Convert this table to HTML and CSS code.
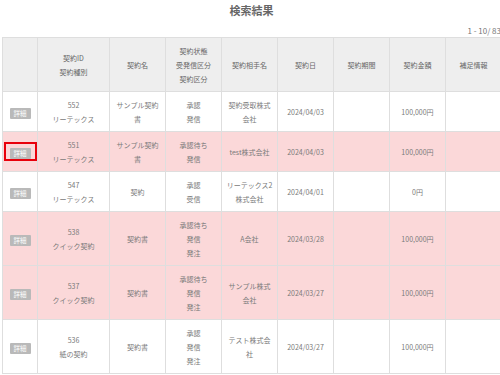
FILE: index.html
```html
<!DOCTYPE html>
<html lang="ja">
<head>
<meta charset="utf-8">
<title>検索結果</title>
<link rel="stylesheet" href="styles.css">
</head>
<body>
<div class="page">
  <h1 class="title">検索結果</h1>
  <div class="count">1 - 10/ 83</div>
  <table class="results">
    <colgroup>
      <col class="c-btn"><col class="c-id"><col class="c"><col class="c"><col class="c"><col class="c"><col class="c"><col class="c"><col class="c">
    </colgroup>
    <thead>
      <tr>
        <th></th>
        <th>契約ID<br>契約種別</th>
        <th>契約名</th>
        <th>契約状態<br>受発信区分<br>契約区分</th>
        <th>契約相手名</th>
        <th>契約日</th>
        <th>契約期間</th>
        <th>契約金額</th>
        <th>補足情報</th>
      </tr>
    </thead>
    <tbody>
      <tr>
        <td><span class="btn">詳細</span></td>
        <td>552<br>リーテックス</td>
        <td>サンプル契約書</td>
        <td>承認<br>発信</td>
        <td>契約受取株式会社</td>
        <td>2024/04/03</td>
        <td></td>
        <td>100,000円</td>
        <td></td>
      </tr>
      <tr class="pink">
        <td><span class="btn marked">詳細</span></td>
        <td>551<br>リーテックス</td>
        <td>サンプル契約書</td>
        <td>承認待ち<br>発信</td>
        <td>test株式会社</td>
        <td>2024/04/03</td>
        <td></td>
        <td>100,000円</td>
        <td></td>
      </tr>
      <tr>
        <td><span class="btn">詳細</span></td>
        <td>547<br>リーテックス</td>
        <td>契約</td>
        <td>承認<br>受信</td>
        <td>リーテックス2株式会社</td>
        <td>2024/04/01</td>
        <td></td>
        <td>0円</td>
        <td></td>
      </tr>
      <tr class="pink">
        <td><span class="btn">詳細</span></td>
        <td>538<br>クイック契約</td>
        <td>契約書</td>
        <td>承認待ち<br>発信<br>発注</td>
        <td>A会社</td>
        <td>2024/03/28</td>
        <td></td>
        <td>100,000円</td>
        <td></td>
      </tr>
      <tr class="pink">
        <td><span class="btn">詳細</span></td>
        <td>537<br>クイック契約</td>
        <td>契約書</td>
        <td>承認待ち<br>発信<br>発注</td>
        <td>サンプル株式会社</td>
        <td>2024/03/27</td>
        <td></td>
        <td>100,000円</td>
        <td></td>
      </tr>
      <tr>
        <td><span class="btn">詳細</span></td>
        <td>536<br>紙の契約</td>
        <td>契約書</td>
        <td>承認<br>発信<br>発注</td>
        <td>テスト株式会社</td>
        <td>2024/03/27</td>
        <td></td>
        <td>100,000円</td>
        <td></td>
      </tr>
    </tbody>
  </table>
</div>
</body>
</html>
```

FILE: styles.css
```css
html, body {
  margin: 0;
  padding: 0;
  overflow: hidden;
  background: #fff;
}

body {
  font-family: "Noto Sans CJK JP", "Noto Sans", sans-serif;
  color: #777;
}

.page {
  width: 499px;
  margin-left: 2px;
}

.title {
  margin: 0;
  padding-top: 2px;
  height: 22px;
  font-size: 11px;
  line-height: 16px;
  font-weight: bold;
  color: #666;
  text-align: center;
}

.count {
  height: 13px;
  font-size: 8px;
  line-height: 13px;
  text-align: right;
  color: #777;
}

.results {
  width: 499px;
  table-layout: fixed;
  border-collapse: collapse;
  font-size: 7px;
  line-height: 14px;
}

.c-btn { width: 35px; }
.c-id { width: 72px; }
.c { width: 56px; }

.results th,
.results td {
  border: 1px solid #dedede;
  padding: 6px 4px 5px;
  text-align: center;
  vertical-align: middle;
  word-break: break-all;
}

.results th {
  background: #eeeeee;
  font-weight: normal;
  color: #666;
}

.results td {
  color: #7a7a7a;
}

.results tr.pink td {
  background: #fbd8d9;
}

.btn {
  display: inline-block;
  background: #b9b9b9;
  color: #fff;
  font-size: 6.5px;
  line-height: 11px;
  height: 11px;
  padding: 0 4px;
  border-radius: 1px;
  vertical-align: middle;
}

.btn.marked {
  position: relative;
}

.btn.marked::after {
  content: "";
  position: absolute;
  left: -6px;
  right: -6px;
  top: -6px;
  bottom: -2px;
  border: 2px solid #e8000b;
}
```
